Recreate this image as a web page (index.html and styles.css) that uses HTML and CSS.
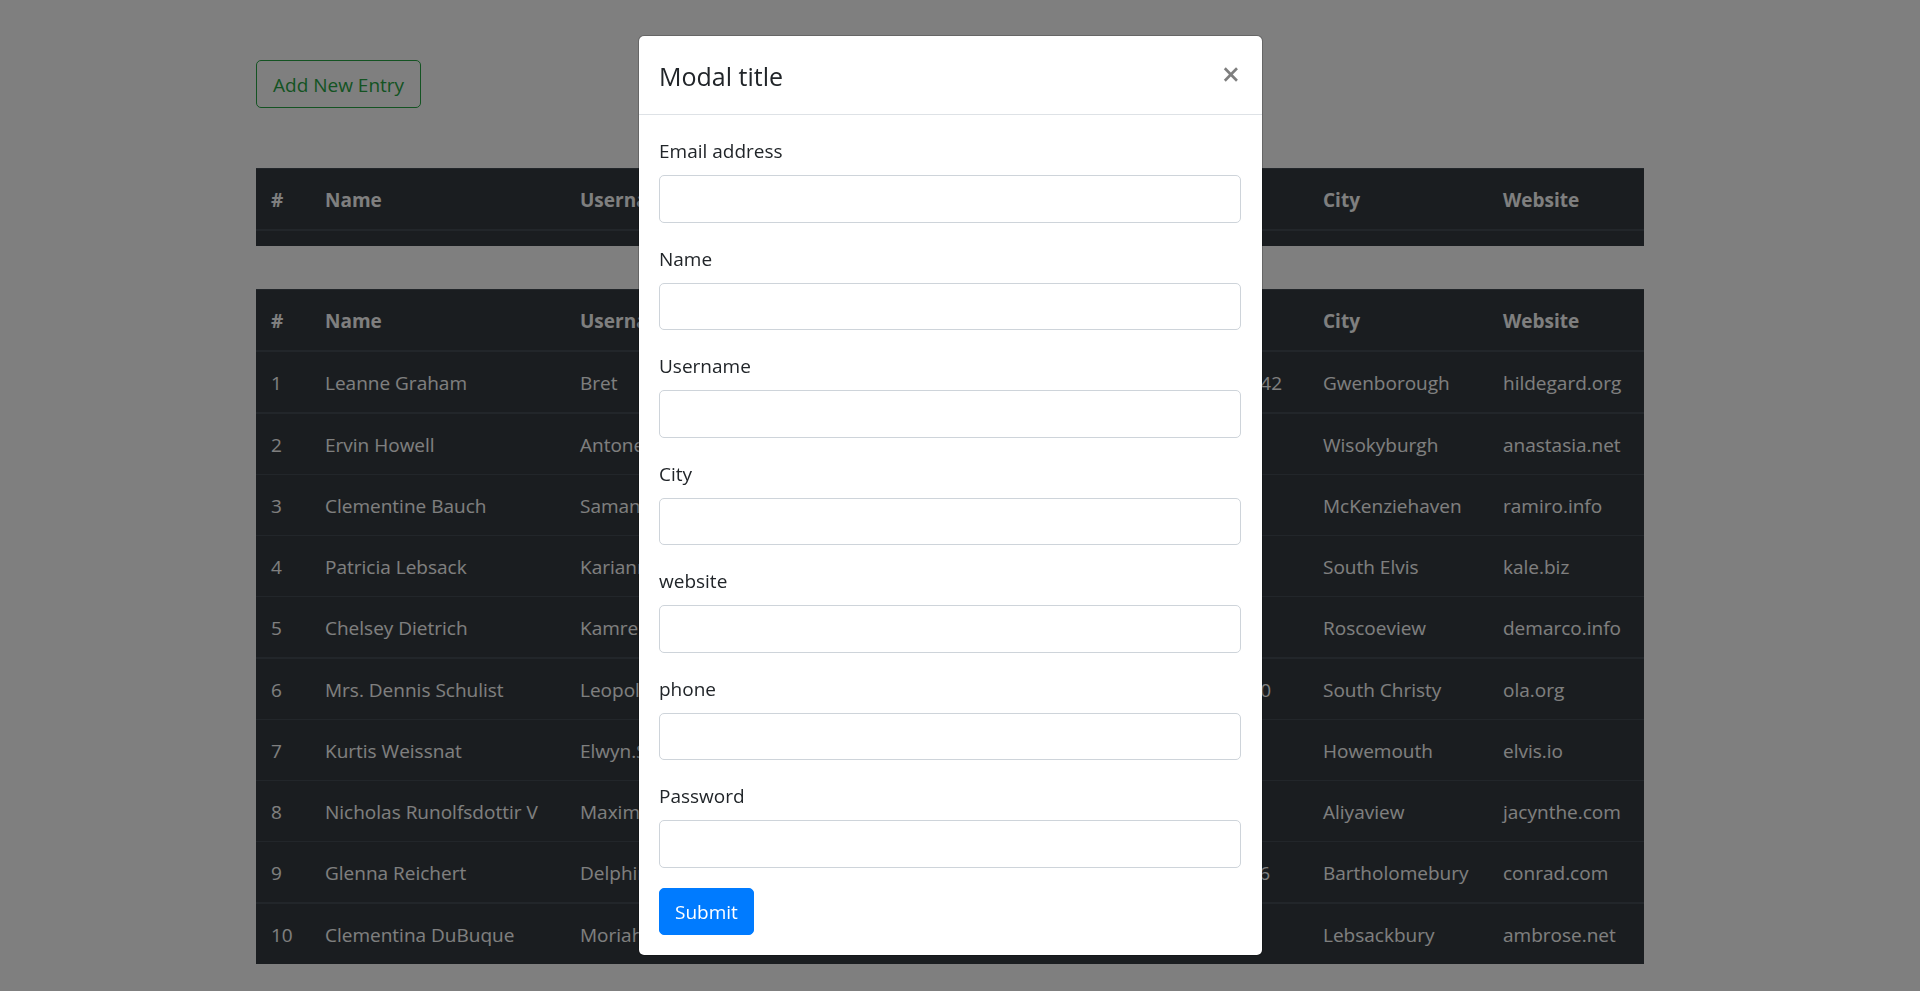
FILE: index.html
```html
<!DOCTYPE html>
<html lang="en">
<head>
<meta charset="utf-8">
<title>Entries</title>
<link rel="stylesheet" href="styles.css">
</head>
<body>
<main class="container">
  <button type="button" class="btn btn-outline">Add New Entry</button>

  <table class="table table-empty">
    <colgroup><col class="c-id"><col class="c-name"><col class="c-user"><col class="c-email"><col class="c-phone"><col class="c-city"><col class="c-site"></colgroup>
    <thead><tr><th scope="col">#</th><th scope="col">Name</th><th scope="col">Username</th><th scope="col">Email</th><th scope="col">Phone</th><th scope="col">City</th><th scope="col">Website</th></tr></thead>
  </table>

  <table class="table">
    <colgroup><col class="c-id"><col class="c-name"><col class="c-user"><col class="c-email"><col class="c-phone"><col class="c-city"><col class="c-site"></colgroup>
    <thead><tr><th scope="col">#</th><th scope="col">Name</th><th scope="col">Username</th><th scope="col">Email</th><th scope="col">Phone</th><th scope="col">City</th><th scope="col">Website</th></tr></thead>
    <tbody>
      <tr><td>1</td><td>Leanne Graham</td><td>Bret</td><td>Sincere@april.biz</td><td>1-770-736-8031 x56442</td><td>Gwenborough</td><td>hildegard.org</td></tr>
      <tr><td>2</td><td>Ervin Howell</td><td>Antonette</td><td>Shanna@melissa.tv</td><td>010-692-6593</td><td>Wisokyburgh</td><td>anastasia.net</td></tr>
      <tr><td>3</td><td>Clementine Bauch</td><td>Samantha</td><td>Nathan@yesenia.net</td><td>1-463-123-4447</td><td>McKenziehaven</td><td>ramiro.info</td></tr>
      <tr><td>4</td><td>Patricia Lebsack</td><td>Karianne</td><td>Julianne.OConner@kory.org</td><td>493-170-9623 x156</td><td>South Elvis</td><td>kale.biz</td></tr>
      <tr><td>5</td><td>Chelsey Dietrich</td><td>Kamren</td><td>Lucio_Hettinger@annie.ca</td><td>(254)954-1289</td><td>Roscoeview</td><td>demarco.info</td></tr>
      <tr><td>6</td><td>Mrs. Dennis Schulist</td><td>Leopoldo_Corkery</td><td>Karley_Dach@jasper.info</td><td>1-477-935-8478 x6430</td><td>South Christy</td><td>ola.org</td></tr>
      <tr><td>7</td><td>Kurtis Weissnat</td><td>Elwyn.Skiles</td><td>Telly.Hoeger@billy.biz</td><td>210.067.6132</td><td>Howemouth</td><td>elvis.io</td></tr>
      <tr><td>8</td><td>Nicholas Runolfsdottir V</td><td>Maxime_Nienow</td><td>Sherwood@rosamond.me</td><td>586.493.6943 x140</td><td>Aliyaview</td><td>jacynthe.com</td></tr>
      <tr><td>9</td><td>Glenna Reichert</td><td>Delphine</td><td>Chaim_McDermott@dana.io</td><td>(775)976-6794 x41206</td><td>Bartholomebury</td><td>conrad.com</td></tr>
      <tr><td>10</td><td>Clementina DuBuque</td><td>Moriah.Stanton</td><td>Rey.Padberg@karina.biz</td><td>024-648-3804</td><td>Lebsackbury</td><td>ambrose.net</td></tr>
    </tbody>
  </table>
</main>

<div class="backdrop">
  <div class="modal" role="dialog" aria-modal="true" aria-labelledby="modal-title">
    <header class="modal-header">
      <h5 class="modal-title" id="modal-title">Modal title</h5>
      <button type="button" class="close" aria-label="Close">×</button>
    </header>
    <form class="modal-body">
      <div class="form-group"><label for="email">Email address</label><input class="form-control" type="email" id="email"></div>
      <div class="form-group"><label for="name">Name</label><input class="form-control" type="text" id="name"></div>
      <div class="form-group"><label for="username">Username</label><input class="form-control" type="text" id="username"></div>
      <div class="form-group"><label for="city">City</label><input class="form-control" type="text" id="city"></div>
      <div class="form-group"><label for="website">website</label><input class="form-control" type="text" id="website"></div>
      <div class="form-group"><label for="phone">phone</label><input class="form-control" type="text" id="phone"></div>
      <div class="form-group"><label for="password">Password</label><input class="form-control" type="password" id="password"></div>
      <button type="submit" class="btn btn-primary">Submit</button>
    </form>
  </div>
</div>
</body>
</html>
```

FILE: styles.css
```css
* {
  box-sizing: border-box;
}

body {
  margin: 0;
  padding-right: 20px;
  background: #fff;
  color: #212529;
  font-family: "Open Sans", "Noto Sans", sans-serif;
  font-size: 19px;
  line-height: 30px;
}

.container {
  max-width: 1428px;
  margin: 0 auto;
  padding: 60px 20px 27px;
}

.btn {
  display: block;
  padding: 9px 16px 7px;
  border: 1px solid transparent;
  border-radius: 5px;
  font: inherit;
}

.btn-outline {
  margin-bottom: 60px;
  border-color: #28a745;
  background: transparent;
  color: #28a745;
}

.btn-primary {
  padding: 8px 15px 7px;
  border-color: #007bff;
  background: #007bff;
  color: #fff;
}

.table {
  width: 100%;
  table-layout: fixed;
  border-spacing: 0;
  border-top: 1px solid #454d55;
  background: #343a40;
  color: #fff;
  white-space: nowrap;
}

.table-empty {
  margin-bottom: 43px;
  border-bottom: 15px solid #343a40;
}

.table th,
.table td {
  padding: 16px 15px 14px;
  text-align: left;
}

.table th {
  border-bottom: 2px solid #454d55;
}

.table td {
  border-bottom: 1px solid #454d55;
}

.table tr:nth-child(4n + 1) td {
  border-bottom-width: 2px;
}

.table tr:last-child td {
  border-bottom: 0;
}

.c-id { width: 54px; }
.c-name { width: 255px; }
.c-user { width: 205px; }
.c-email { width: 290px; }
.c-phone { width: 248px; }
.c-city { width: 180px; }
.c-site { width: 156px; }

.backdrop {
  position: fixed;
  inset: 0;
  padding: 35px 19px 35px 0;
  overflow: hidden;
  background: rgba(0, 0, 0, 0.5);
}

.modal {
  max-width: 625px;
  margin: 0 auto;
  border: 1px solid rgba(0, 0, 0, 0.2);
  border-radius: 6px;
  background: #fff;
  background-clip: padding-box;
}

.modal-header {
  display: flex;
  align-items: flex-start;
  justify-content: space-between;
  padding: 20px 20px 18px;
  border-bottom: 1px solid #dee2e6;
}

.modal-title {
  margin: 0;
  font-size: 25px;
  font-weight: 500;
  line-height: 40px;
}

.close {
  padding: 0 2px;
  border: 0;
  background: none;
  color: #000;
  font: inherit;
  font-size: 32px;
  font-weight: 600;
  line-height: 36px;
  opacity: 0.5;
}

.modal-body {
  padding: 20px 21px 20px 20px;
}

.form-group {
  display: flex;
  flex-direction: column;
  gap: 8px;
  margin-bottom: 20px;
  line-height: 32px;
}

.form-control {
  width: 100%;
  height: 48px;
  padding: 8px 15px;
  border: 1px solid #ced4da;
  border-radius: 5px;
  background: #fff;
  color: #495057;
  font: inherit;
}

.form-group:nth-child(even) .form-control {
  height: 47px;
}
```
